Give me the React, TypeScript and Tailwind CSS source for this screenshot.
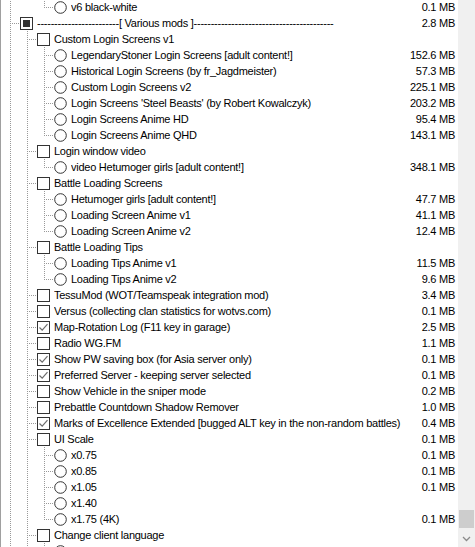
import React from 'react'

type Row = {
  level: number
  kind: 'check' | 'radio'
  state?: 'on' | 'off' | 'mixed'
  label: string
  size?: string
  hidden?: boolean
}

const rows: Row[] = [
  { level: 1, kind: 'check', label: 'Skins', hidden: true },
  { level: 2, kind: 'check', label: 'Contour icons', hidden: true },
  { level: 3, kind: 'radio', label: 'v6 black-white', size: '0.1 MB' },
  {
    level: 1,
    kind: 'check',
    state: 'mixed',
    label: '------------------------[ Various mods ]-----------------------------------------',
    size: '2.8 MB',
  },
  { level: 2, kind: 'check', label: 'Custom Login Screens v1' },
  { level: 3, kind: 'radio', label: 'LegendaryStoner Login Screens [adult content!]', size: '152.6 MB' },
  { level: 3, kind: 'radio', label: 'Historical Login Screens (by fr_Jagdmeister)', size: '57.3 MB' },
  { level: 3, kind: 'radio', label: 'Custom Login Screens v2', size: '225.1 MB' },
  { level: 3, kind: 'radio', label: "Login Screens 'Steel Beasts' (by Robert Kowalczyk)", size: '203.2 MB' },
  { level: 3, kind: 'radio', label: 'Login Screens Anime HD', size: '95.4 MB' },
  { level: 3, kind: 'radio', label: 'Login Screens Anime QHD', size: '143.1 MB' },
  { level: 2, kind: 'check', label: 'Login window video' },
  { level: 3, kind: 'radio', label: 'video Hetumoger girls [adult content!]', size: '348.1 MB' },
  { level: 2, kind: 'check', label: 'Battle Loading Screens' },
  { level: 3, kind: 'radio', label: 'Hetumoger girls [adult content!]', size: '47.7 MB' },
  { level: 3, kind: 'radio', label: 'Loading Screen Anime v1', size: '41.1 MB' },
  { level: 3, kind: 'radio', label: 'Loading Screen Anime v2', size: '12.4 MB' },
  { level: 2, kind: 'check', label: 'Battle Loading Tips' },
  { level: 3, kind: 'radio', label: 'Loading Tips Anime v1', size: '11.5 MB' },
  { level: 3, kind: 'radio', label: 'Loading Tips Anime v2', size: '9.6 MB' },
  { level: 2, kind: 'check', label: 'TessuMod (WOT/Teamspeak integration mod)', size: '3.4 MB' },
  { level: 2, kind: 'check', label: 'Versus (collecting clan statistics for wotvs.com)', size: '0.1 MB' },
  { level: 2, kind: 'check', state: 'on', label: 'Map-Rotation Log (F11 key in garage)', size: '2.5 MB' },
  { level: 2, kind: 'check', label: 'Radio WG.FM', size: '1.1 MB' },
  { level: 2, kind: 'check', state: 'on', label: 'Show PW saving box (for Asia server only)', size: '0.1 MB' },
  { level: 2, kind: 'check', state: 'on', label: 'Preferred Server - keeping server selected', size: '0.1 MB' },
  { level: 2, kind: 'check', label: 'Show Vehicle in the sniper mode', size: '0.2 MB' },
  { level: 2, kind: 'check', label: 'Prebattle Countdown Shadow Remover', size: '1.0 MB' },
  {
    level: 2,
    kind: 'check',
    state: 'on',
    label: 'Marks of Excellence Extended [bugged ALT key in the non-random battles)',
    size: '0.4 MB',
  },
  { level: 2, kind: 'check', label: 'UI Scale', size: '0.1 MB' },
  { level: 3, kind: 'radio', label: 'x0.75', size: '0.1 MB' },
  { level: 3, kind: 'radio', label: 'x0.85', size: '0.1 MB' },
  { level: 3, kind: 'radio', label: 'x1.05', size: '0.1 MB' },
  { level: 3, kind: 'radio', label: 'x1.40' },
  { level: 3, kind: 'radio', label: 'x1.75 (4K)', size: '0.1 MB' },
  { level: 2, kind: 'check', label: 'Change client language' },
  { level: 3, kind: 'radio', label: '' },
  { level: 3, kind: 'radio', label: 'Deutsch', hidden: true },
  { level: 2, kind: 'check', label: 'More', hidden: true },
  { level: 1, kind: 'check', label: 'Tail', hidden: true },
]

// does the branch at level k still have a later sibling after row i?
const continues = (i: number, k: number) => {
  for (let j = i + 1; j < rows.length; j++) {
    if (rows[j].level < k) return false
    if (rows[j].level === k) return true
  }
  return false
}

type GuideKind = 'none' | 'line' | 'tee' | 'end'

const Guide = ({ kind }: { kind: GuideKind }) => (
  <svg width="17" height="16" className="shrink-0" shapeRendering="crispEdges">
    {(kind === 'line' || kind === 'tee') && (
      <line x1="8.5" y1="0" x2="8.5" y2="16" stroke="#999999" strokeDasharray="1 1" />
    )}
    {kind === 'end' && <line x1="8.5" y1="0" x2="8.5" y2="9" stroke="#999999" strokeDasharray="1 1" />}
    {(kind === 'tee' || kind === 'end') && (
      <line x1="10" y1="8.5" x2="17" y2="8.5" stroke="#999999" strokeDasharray="1 1" />
    )}
  </svg>
)

const CheckBox = ({ state }: { state?: Row['state'] }) => (
  <div className="mt-[2px] flex h-[13px] w-[13px] shrink-0 items-center justify-center border border-[#333333] bg-white">
    {state === 'mixed' && <div className="h-[7px] w-[7px] bg-[#333333]" />}
    {state === 'on' && (
      <svg width="11" height="11" viewBox="0 0 11 11">
        <path d="M1.5 5.5 L4.2 8.2 L9.5 2.2" fill="none" stroke="#6d6d6d" strokeWidth="1.2" />
      </svg>
    )}
  </div>
)

const Radio = () => (
  <svg width="13" height="13" viewBox="0 0 13 13" className="mt-[2px] shrink-0">
    <circle cx="6.5" cy="6.5" r="5.8" fill="white" stroke="#333333" strokeWidth="1" />
  </svg>
)

const TreeRow = ({ row, index }: { row: Row; index: number }) => {
  const guides: GuideKind[] = []
  for (let k = 1; k < row.level; k++) guides.push(continues(index, k) ? 'line' : 'none')
  guides.push(continues(index, row.level) ? 'tee' : 'end')

  return (
    <div className="flex h-4 items-start">
      {guides.map((g, i) => (
        <Guide key={i} kind={g} />
      ))}
      <div className="ml-px">{row.kind === 'check' ? <CheckBox state={row.state} /> : <Radio />}</div>
      <span className="ml-[4px] min-w-0 flex-1 overflow-hidden whitespace-pre leading-4">{row.label}</span>
      {row.size && <span className="shrink-0 pl-2 pr-[3px] text-right leading-4">{row.size}</span>}
    </div>
  )
}

export default function App() {
  return (
    <div className="flex h-[547px] w-[475px] overflow-hidden bg-white font-['Liberation_Sans',Tahoma,sans-serif] text-[11px] tracking-[-0.25px] text-black">
      {/* Tree list */}
      <div className="flex-1 overflow-hidden border-l border-[#a0a0a0]">
        <div className="-mt-px pl-px">
          {rows.map((row, i) => (row.hidden ? null : <TreeRow key={i} row={row} index={i} />))}
        </div>
      </div>

      {/* Scrollbar */}
      <div className="flex w-[17px] shrink-0 flex-col justify-end bg-[#f0f0f0]">
        <div className="mx-px h-[18px] bg-[#cdcdcd]" />
        <div className="mt-[2px] flex h-[17px] items-center justify-center">
          <svg width="9" height="6" viewBox="0 0 9 6">
            <path d="M1 1 L4.5 4.5 L8 1" fill="none" stroke="#8a8a8a" strokeWidth="1.3" />
          </svg>
        </div>
      </div>
    </div>
  )
}
